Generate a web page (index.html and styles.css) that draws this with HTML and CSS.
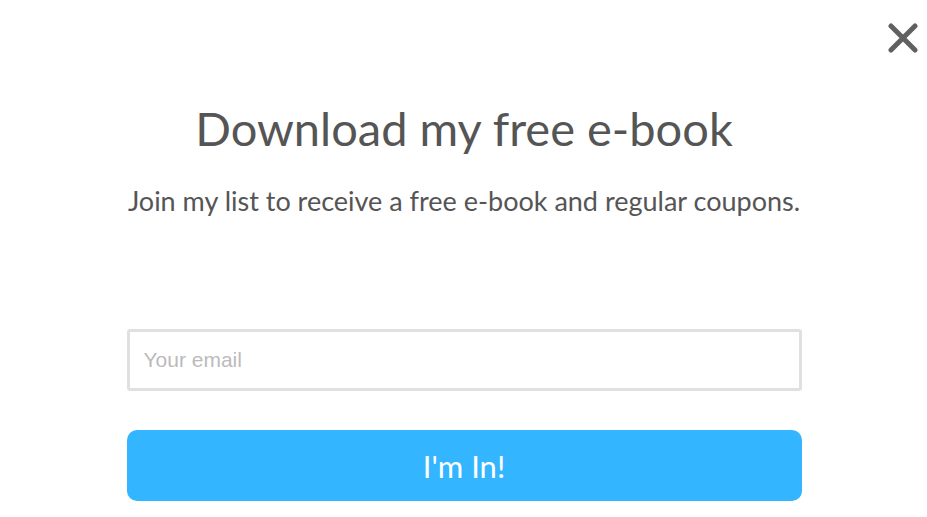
FILE: index.html
```html
<!DOCTYPE html>
<html lang="en">
<head>
<meta charset="utf-8"/>
<meta content="width=device-width, initial-scale=1.0" name="viewport"/>
<title>Download my free e-book</title>
<link rel="stylesheet" href="styles.css">
</head>
<body>
<div class="popup">
  <button class="close" aria-label="Close">
    <svg width="30" height="30" viewBox="0 0 30 30">
      <path d="M3 3 L27 27 M27 3 L3 27" stroke="#606060" stroke-width="5" stroke-linecap="round"/>
    </svg>
  </button>
  <div class="content">
    <h1 class="title">Download my free e-book</h1>
    <p class="subtitle">Join my list to receive a free e-book and regular coupons.</p>
    <form class="signup">
      <input class="email" type="email" placeholder="Your email"/>
      <button class="submit" type="button">I'm In!</button>
    </form>
  </div>
</div>
</body>
</html>
```

FILE: styles.css
```css
body {
    margin: 0;
    background-color: #ffffff;
    font-family: 'Lato', sans-serif;
    color: #555555;
}

.popup {
    position: relative;
    width: 927px;
    height: 517px;
    padding-left: 1px;
    box-sizing: border-box;
}

.close {
    position: absolute;
    top: 23px;
    right: 9px;
    padding: 0;
    border: none;
    background: none;
    cursor: pointer;
}

.close svg {
    display: block;
}

.content {
    width: 675px;
    margin: 0 auto;
    padding-top: 96px;
    text-align: center;
}

.title {
    margin: 0;
    font-size: 47px;
    font-weight: 400;
    line-height: 64px;
}

.subtitle {
    margin: 24px 0 0;
    font-size: 27px;
    line-height: 34px;
}

.signup {
    display: flex;
    flex-direction: column;
    gap: 39px;
    margin-top: 111px;
}

.email {
    height: 62px;
    box-sizing: border-box;
    padding: 0 14px;
    border: 3px solid #e0e0e0;
    border-radius: 3px;
    font-family: 'Liberation Sans', Arial, sans-serif;
    font-size: 21px;
    color: #555555;
    outline: none;
}

.email::placeholder {
    color: #bbbbbb;
}

.submit {
    height: 71px;
    border: none;
    border-radius: 10px;
    background-color: #33b5ff;
    color: #ffffff;
    font-family: 'Lato', sans-serif;
    font-size: 31px;
    cursor: pointer;
}
```
